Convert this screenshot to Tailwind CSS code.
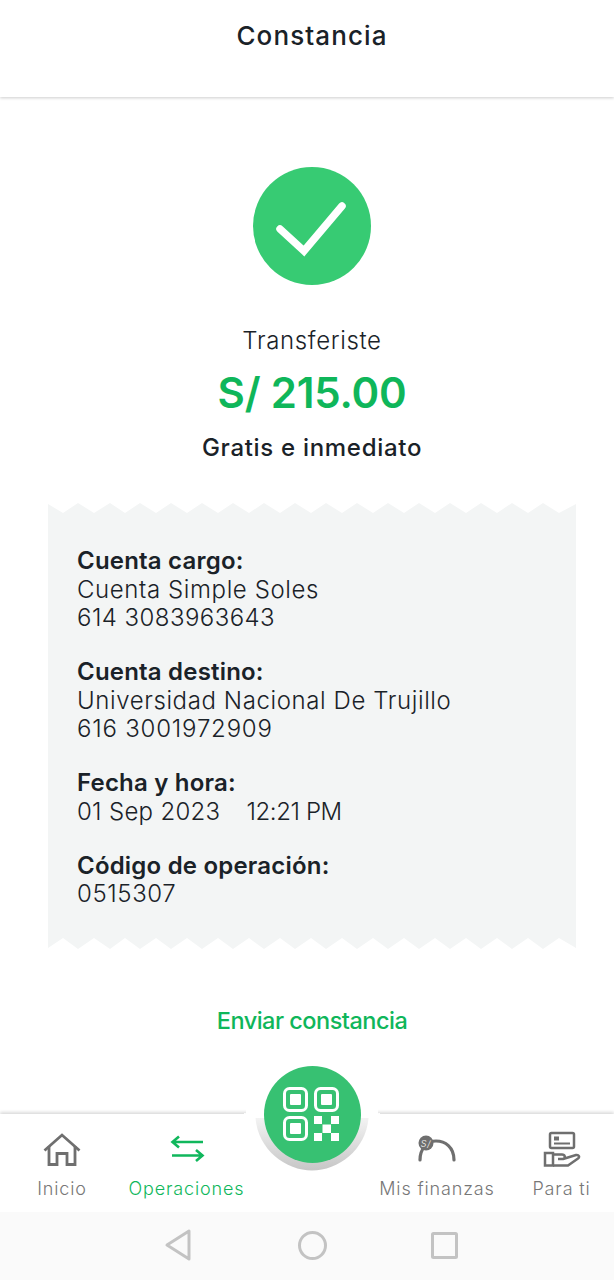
<!DOCTYPE html>
<html lang="es"><head><meta charset="utf-8"><script src="https://cdn.jsdelivr.net/npm/@tailwindcss/browser@4"></script><title>Constancia</title></head>
<body class="bg-white font-['Inter','Noto_Sans',sans-serif] text-[#1a2228]">
<div class="relative w-[614px] h-[1280px] overflow-hidden flex flex-col bg-white">
  <header class="h-[97px] shrink-0 bg-white shadow-[0_1px_3px_rgba(0,0,0,0.2)] flex justify-center pt-[20px] pl-[10px]">
    <h1 class="text-[26px] leading-[32px] font-medium tracking-[1.1px]">Constancia</h1>
  </header>
  <main class="flex-1 flex flex-col items-center pl-[10px]">
    <div class="mt-[70px] w-[118px] h-[118px] rounded-full bg-[#37cb73]">
      <svg width="118" height="118" viewBox="0 0 118 118" fill="none"><path d="M27 62 L51 84 L89 39" stroke="#fff" stroke-width="7.500" stroke-linecap="round"/></svg>
    </div>
    <p class="mt-[41px] text-[24px] leading-[30px] font-light tracking-[0.65px]">Transferiste</p>
    <p class="mt-[12px] text-[42px] leading-[50px] font-semibold tracking-[-0.2px] text-[#0fb65a]">S/ 215.00</p>
    <p class="mt-[15px] text-[24px] leading-[30px] font-medium tracking-[0.7px]">Gratis e inmediato</p>
    <div class="relative mt-[40px] w-[528px] h-[446px]">
      <svg class="absolute inset-0" width="528" height="446" viewBox="0 0 528 446"><path fill="#f3f5f5" d="M0 1 L15 10 L30 0 L46 10 L62 0 L77 10 L92 0 L108 10 L123 0 L139 10 L154 0 L170 10 L185 0 L201 10 L216 0 L232 10 L247 0 L263 10 L278 0 L294 10 L309 0 L325 10 L340 0 L356 10 L371 0 L387 10 L402 0 L418 10 L433 0 L449 10 L464 0 L480 10 L495 0 L511 10 L528 1 L528 445 L511 435 L495 446 L480 435 L464 446 L449 435 L433 446 L418 435 L402 446 L387 435 L371 446 L356 435 L340 446 L325 435 L309 446 L294 435 L278 446 L263 435 L247 446 L232 435 L216 446 L201 435 L185 446 L170 435 L154 446 L139 435 L123 446 L108 435 L92 446 L77 435 L62 446 L46 435 L30 446 L15 435 L0 445 Z"/></svg>
      <div class="relative pl-[29px] pt-[44px] flex flex-col gap-[25.500px] text-[24px] leading-[28.500px] font-light tracking-[0.6px]">
        <div><p class="font-semibold tracking-[0.2px]">Cuenta cargo:</p><p>Cuenta Simple Soles</p><p class="tracking-[0.45px]">614 3083963643</p></div>
        <div><p class="font-semibold tracking-[0.2px]">Cuenta destino:</p><p>Universidad Nacional De Trujillo</p><p class="tracking-[0.8px]">616 3001972909</p></div>
        <div><p class="font-semibold tracking-[0.2px]">Fecha y hora:</p><p class="tracking-[0.3px]">01 Sep 2023<span class="ml-[26px] tracking-[-0.4px]">12:21 PM</span></p></div>
        <div><p class="font-semibold tracking-[0.2px]">Código de operación:</p><p>0515307</p></div>
      </div>
    </div>
    <a class="mt-[57px] text-[23.500px] leading-[30px] font-medium text-[#0fb65a] tracking-[-0.5px]">Enviar constancia</a>
  </main>
  <nav class="absolute left-0 top-[1114px] w-[614px] h-[98px] bg-white shadow-[0_-2px_3px_rgba(0,0,0,0.14)] flex text-[#777] text-[18px] leading-[24px] font-light tracking-[0.85px]">
    <div class="w-[124px] shrink-0 flex flex-col items-center pt-[17px]">
      <svg width="38" height="36" viewBox="0 0 38 36" fill="none" stroke="#6f6f6f" stroke-width="2.800"><path d="M1.500 19.500 L19 4 L36.500 19.500"/><path d="M6 15 V33.500 H14 V22.500 H24 V33.500 H32 V15"/></svg>
      <span class="mt-[10px]">Inicio</span>
    </div>
    <div class="w-[125px] shrink-0 flex flex-col items-center pt-[17px] text-[#10b75c]">
      <svg width="38" height="36" viewBox="0 0 38 36" fill="none" stroke="#10b75c" stroke-width="2.600"><path d="M35 11 H5 M11 5.500 L4.500 11 L11 16.500"/><path d="M4 24.500 H34 M28 19 L34.500 24.500 L28 30"/></svg>
      <span class="mt-[10px]">Operaciones</span>
    </div>
    <div class="w-[126px] shrink-0"></div>
    <div class="w-[124px] shrink-0 flex flex-col items-center pt-[17px]">
      <svg width="38" height="36" viewBox="0 0 38 36" fill="none"><path d="M2 29 C2 17 10 10 18 10 C27 10 36 16 36 29" stroke="#6f6f6f" stroke-width="3.200" stroke-linecap="round"/><circle cx="8" cy="12" r="7.500" fill="#6f6f6f"/><text x="8" y="15.500" text-anchor="middle" font-size="9" font-style="italic" fill="#fff" font-family="Inter">S/</text></svg>
      <span class="mt-[10px]">Mis finanzas</span>
    </div>
    <div class="w-[125px] shrink-0 flex flex-col items-center pt-[17px]">
      <svg width="38" height="36" viewBox="0 0 38 36" fill="none" stroke="#6f6f6f" stroke-width="2.500"><rect x="7" y="2" width="24" height="15" rx="1.500"/><rect x="11" y="5.500" width="5" height="4" fill="#6f6f6f" stroke="none"/><path d="M11 12.500 H27" stroke-width="2"/><rect x="2" y="22" width="8" height="12.500"/><path d="M10 23.500 H19 C22 23.500 23 27 20 28 H15 M20 28 L33 24 C36 23.500 37 26 35 27.500 L25 34.500 H10"/></svg>
      <span class="mt-[10px]">Para ti</span>
    </div>
  </nav>
  <svg class="absolute left-[240px] top-[1100px]" width="144" height="80" viewBox="0 0 144 80" fill="none">
    <defs><linearGradient id="g" x1="0" y1="0" x2="0" y2="1"><stop offset="0" stop-color="#f3f3f3"/><stop offset="1" stop-color="#c6c6c6"/></linearGradient></defs>
    <rect x="6" y="8" width="132" height="9" fill="#fff"/>
    <path d="M4 13 C11 13 14 17 16 22 C21 52 50 70.500 72 70.500 C94 70.500 123 52 128 22 C130 17 133 13 140 13 V16 H4 Z" fill="#fff"/>
    <path d="M15.500 18 C18 50 46 70.500 72 70.500 C98 70.500 126 50 128.500 18 Z" fill="url(#g)"/>
  </svg>
  <div class="absolute left-[264px] top-[1066px] w-[97px] h-[97px] rounded-full bg-[#37c172]">
    <svg width="97" height="97" viewBox="0 0 97 97" fill="none" stroke="#fff" stroke-width="3"><rect x="20.500" y="22.500" width="22" height="22" rx="5"/><rect x="51.500" y="22.500" width="22" height="22" rx="5"/><rect x="20.500" y="51.500" width="22" height="22" rx="5"/><g fill="#fff" stroke="none"><rect x="26" y="28" width="11" height="11" rx="1"/><rect x="57" y="28" width="11" height="11" rx="1"/><rect x="26" y="57" width="11" height="11" rx="1"/><rect x="50" y="50" width="8" height="8"/><rect x="67" y="50" width="8" height="8"/><rect x="58.500" y="58.500" width="8.500" height="8.500"/><rect x="50" y="67" width="8" height="8"/><rect x="67" y="67" width="8" height="8"/></g></svg>
  </div>
  <div class="absolute left-0 top-[1212px] w-[614px] h-[68px] bg-[#fafafa] flex">
    <svg width="614" height="68" viewBox="0 0 614 68" fill="none" stroke="#c3c3c3" stroke-width="3"><path d="M189 19 V47 L167 33 Z" stroke-linejoin="round"/><circle cx="312.500" cy="33.500" r="13"/><rect x="432.500" y="21.500" width="24" height="24" rx="1"/></svg>
  </div>
</div>
</body></html>
